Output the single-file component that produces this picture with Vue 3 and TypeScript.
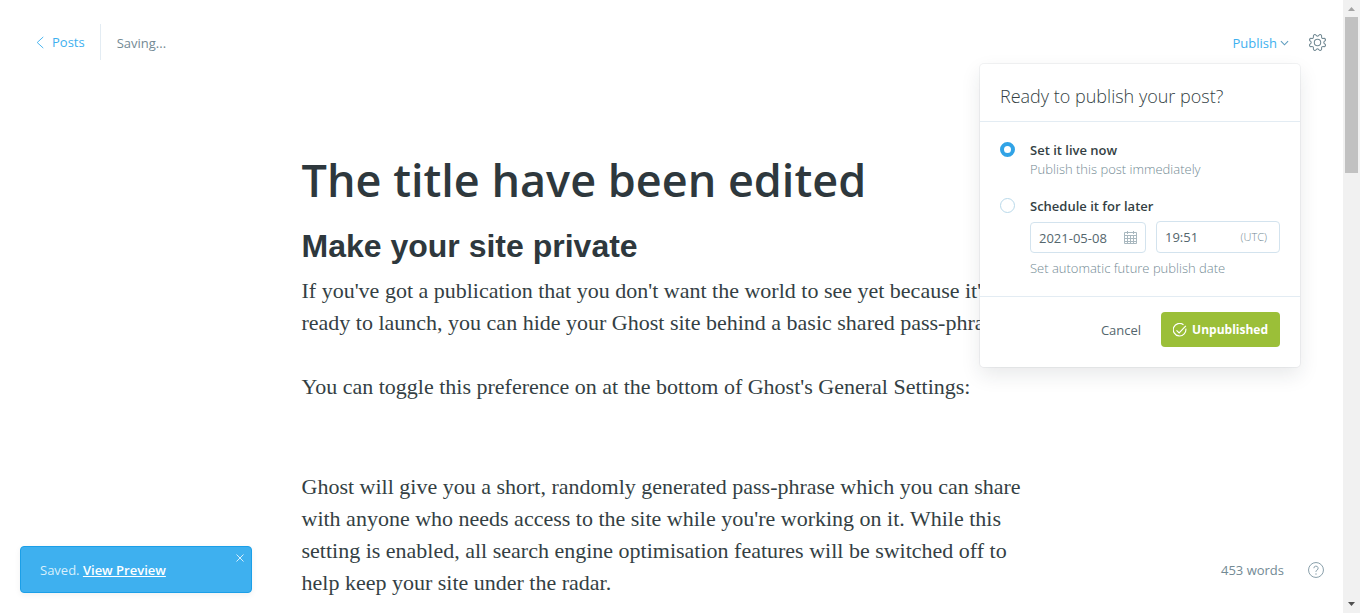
<script setup lang="ts">
import { ref } from 'vue'

const mode = ref<'now' | 'later'>('now')
const date = ref('2021-05-08')
const time = ref('19:51')
</script>

<template>
  <div class="shell">
    <div class="editor">
      <header class="topbar">
        <a class="back" href="#posts">
          <svg class="icon-back" viewBox="0 0 8 14" aria-hidden="true"><path d="M7.5 1 1 7l6.500 6" /></svg>
          Posts
        </a>
        <span class="status">Saving...</span>
        <div class="actions">
          <button class="publish" type="button">
            Publish
            <svg class="icon-down" viewBox="0 0 10 6" aria-hidden="true"><path d="M1 .8 5 5 9 .8" /></svg>
          </button>
          <button class="settings" type="button" aria-label="Settings">
            <svg class="icon-cog" viewBox="0 0 24 24" aria-hidden="true">
              <path d="M10.546 2.438a1.957 1.957 0 0 0 2.908 0L14.4 1.4a1.959 1.959 0 0 1 3.41 1.413l-.071 1.4a1.958 1.958 0 0 0 2.051 2.054l1.4-.071a1.959 1.959 0 0 1 1.41 3.41l-1.042.94a1.96 1.96 0 0 0 0 2.909l1.042.94a1.959 1.959 0 0 1-1.413 3.41l-1.4-.071a1.958 1.958 0 0 0-2.056 2.056l.071 1.4A1.959 1.959 0 0 1 14.4 22.6l-.941-1.041a1.959 1.959 0 0 0-2.908 0L9.606 22.6A1.959 1.959 0 0 1 6.2 21.192l.072-1.4a1.958 1.958 0 0 0-2.056-2.056l-1.4.071A1.958 1.958 0 0 1 1.4 14.4l1.041-.94a1.96 1.96 0 0 0 0-2.909L1.4 9.606A1.958 1.958 0 0 1 2.809 6.2l1.4.071a1.958 1.958 0 0 0 2.058-2.06L6.2 2.81A1.959 1.959 0 0 1 9.606 1.4z" />
              <circle cx="12" cy="12" r="4.500" />
            </svg>
          </button>
        </div>
      </header>

      <main class="post">
        <h1>The title have been edited</h1>
        <h2>Make your site private</h2>
        <p>
          If you've got a publication that you don't want the world to see yet because it's not<br />
          ready to launch, you can hide your Ghost site behind a basic shared pass-phrase.
        </p>
        <p>You can toggle this preference on at the bottom of Ghost's General Settings:</p>
        <p class="after-image">
          Ghost will give you a short, randomly generated pass-phrase which you can share<br />
          with anyone who needs access to the site while you're working on it. While this<br />
          setting is enabled, all search engine optimisation features will be switched off to<br />
          help keep your site under the radar.
        </p>
      </main>

      <form class="menu" @submit.prevent>
        <h3>Ready to publish your post?</h3>
        <div class="options">
          <div class="option">
            <input id="now" v-model="mode" type="radio" name="mode" value="now" />
            <div class="option-body">
              <label for="now">Set it live now</label>
              <span class="hint">Publish this post immediately</span>
            </div>
          </div>
          <div class="option">
            <input id="later" v-model="mode" type="radio" name="mode" value="later" />
            <div class="option-body">
              <label for="later">Schedule it for later</label>
              <div class="fields">
                <div class="field date">
                  <input v-model="date" type="text" aria-label="Publish date" />
                  <svg class="icon-cal" viewBox="0 0 13 13" aria-hidden="true">
                    <path d="M.5 1.500h12v11H.5zM.5 4.500h12M.5 7.500h12M.5 10.500h12M3.500 4v8.500M6.500 4v8.500M9.500 4v8.500M3.500 0v3M9.500 0v3" />
                  </svg>
                </div>
                <div class="field time">
                  <input v-model="time" type="text" aria-label="Publish time" />
                  <span class="zone">(UTC)</span>
                </div>
              </div>
              <span class="hint">Set automatic future publish date</span>
            </div>
          </div>
        </div>
        <footer class="menu-foot">
          <button class="cancel" type="button">Cancel</button>
          <button class="confirm" type="submit">
            <svg class="icon-check" viewBox="0 0 24 24" aria-hidden="true">
              <path d="m6 12.500 4.500 4.500L22 5M21.900 9.500A10.800 10.800 0 1 1 18 3" />
            </svg>
            Unpublished
          </button>
        </footer>
      </form>

      <aside class="toast" role="status">
        <span class="toast-text">Saved. <a href="#preview">View Preview</a></span>
        <button class="close" type="button" aria-label="Close">
          <svg viewBox="0 0 8 8" aria-hidden="true"><path d="m.5.5 7 7m0-7-7 7" /></svg>
        </button>
      </aside>

      <div class="stats">
        <span>453 words</span>
        <a href="#help" aria-label="Help">
          <svg class="icon-help" viewBox="0 0 24 24" aria-hidden="true">
            <circle cx="12" cy="12" r="11.200" />
            <path d="M8.800 9.300a3.200 3.200 0 1 1 4.500 3c-.9.400-1.300 1-1.300 1.900v.8" />
            <circle class="dot" cx="12" cy="18" r="1" />
          </svg>
        </a>
      </div>
    </div>

    <div class="scrollbar" aria-hidden="true">
      <svg class="arrow up" viewBox="0 0 7 4"><path d="M0 4 3.500 0 7 4z" /></svg>
      <div class="thumb"></div>
      <svg class="arrow down" viewBox="0 0 7 4"><path d="M0 0h7L3.500 4z" /></svg>
    </div>
  </div>
</template>

<style>
body {
  margin: 0;
  background: #fff;
}
</style>

<style scoped>
* {
  box-sizing: border-box;
}

.shell {
  display: flex;
  height: 100vh;
  overflow: hidden;
  font: 13px/20px "Open Sans", "Noto Sans", sans-serif;
  color: #343f44;
}

button {
  padding: 0;
  border: 0;
  background: none;
  font: inherit;
  cursor: pointer;
}

svg {
  display: block;
  flex: none;
  fill: none;
  stroke: currentColor;
}

.editor {
  position: relative;
  flex: 1;
  min-width: 0;
  overflow: hidden;
}

.topbar {
  display: flex;
  align-items: center;
  height: 84px;
  padding: 0 17px 0 36px;
}

.back {
  display: flex;
  align-items: center;
  gap: 8px;
  height: 36px;
  padding-right: 15px;
  border-right: 1px solid #e3ecf3;
  color: #3eb0ef;
  text-decoration: none;
}

.icon-back {
  width: 8px;
  height: 13px;
}

.status {
  padding: 2px 0 0 16px;
  color: #738a94;
}

.actions {
  display: flex;
  align-items: center;
  gap: 20px;
  margin-left: auto;
}

.publish {
  display: flex;
  align-items: center;
  gap: 3px;
  padding-top: 2px;
  color: #3eb0ef;
}

.icon-down {
  width: 9px;
  height: 6px;
  stroke-width: 1.2;
  color: #5f9dbf;
}

.settings {
  color: #738a94;
}

.icon-cog {
  width: 17px;
  height: 17px;
  stroke-width: 1.5;
}

.post {
  max-width: 740px;
  margin: 0 auto;
  padding-top: 64px;
}

h1 {
  margin: 0;
  font-size: 45px;
  line-height: 64px;
  font-weight: 600;
  color: #2e383d;
}

h2 {
  margin: 14px 0 9px;
  font: bold 32px/40px "Liberation Sans", Arial, sans-serif;
  color: #2e383d;
}

p {
  margin: 0 0 32px;
  font: 22px/32px "Liberation Serif", Georgia, serif;
  white-space: nowrap;
}

.after-image {
  margin-top: 68px;
}

.menu {
  position: absolute;
  top: 64px;
  right: 43px;
  width: 320px;
  border-radius: 4px;
  background: #fff;
  box-shadow: 0 0 0 1px rgba(99, 114, 130, 0.08), 0 8px 20px rgba(27, 39, 51, 0.1);
}

h3 {
  margin: 0;
  padding: 20px 20px 12px;
  border-bottom: 1px solid #e3ecf3;
  font-size: 18px;
  line-height: 25px;
  font-weight: 300;
}

.options {
  display: flex;
  flex-direction: column;
  gap: 17px;
  padding: 18px 20px;
}

.option {
  display: flex;
  gap: 15px;
}

.option > input {
  appearance: none;
  flex: none;
  width: 15px;
  height: 15px;
  margin: 2px 0 0;
  border: 1px solid #b9d9ea;
  border-radius: 50%;
  background: #fff;
}

.option > input:checked {
  border: 4px solid #31a3e6;
}

.option-body {
  flex: 1;
  min-width: 0;
}

label,
.hint {
  display: block;
}

label {
  font-weight: 600;
}

.hint {
  line-height: 19px;
  font-weight: 300;
  color: #738a94;
}

.fields {
  display: flex;
  align-items: flex-end;
  gap: 10px;
  margin: 5px 0 6px;
}

.field {
  display: flex;
  align-items: center;
  padding: 0 8px;
  border: 1px solid #d3e3ee;
  border-radius: 4px;
}

.field input {
  flex: 1;
  width: 0;
  min-width: 0;
  padding: 0;
  border: 0;
  outline: 0;
  background: none;
  font: inherit;
  color: #54666d;
}

.date {
  width: 116px;
  height: 31px;
}

.time {
  flex: 1;
  height: 32px;
  padding-right: 12px;
}

.icon-cal {
  width: 13px;
  height: 13px;
  color: #a9b8bf;
}

.zone {
  font-size: 11px;
  font-weight: 300;
  color: #738a94;
}

.menu-foot {
  display: flex;
  align-items: center;
  justify-content: flex-end;
  gap: 20px;
  padding: 15px 20px 20px;
  border-top: 1px solid #e3ecf3;
}

.cancel {
  color: #54666d;
}

.confirm {
  display: flex;
  align-items: center;
  gap: 5px;
  height: 35px;
  padding: 0 12px;
  border-radius: 4px;
  background: #9bbf38;
  color: #fff;
  font-size: 12px;
  font-weight: 700;
}

.icon-check {
  width: 14px;
  height: 14px;
  stroke-width: 2;
}

.toast {
  position: absolute;
  left: 20px;
  bottom: 20px;
  display: flex;
  justify-content: space-between;
  width: 232px;
  height: 47px;
  padding: 6px 6px 6px 19px;
  border: 1px solid #1b9fe8;
  border-radius: 4px;
  background: #3eb0ef;
  color: #d8effc;
  box-shadow: 0 2px 6px rgba(0, 0, 0, 0.06);
}

.toast-text {
  align-self: center;
}

.toast a {
  color: #fff;
  font-weight: 600;
}

.close {
  align-self: flex-start;
  padding: 1px;
  color: #d8effc;
}

.close svg {
  width: 8px;
  height: 8px;
}

.stats {
  position: absolute;
  right: 19px;
  bottom: 33px;
  display: flex;
  align-items: center;
  gap: 24px;
  color: #738a94;
}

.stats a {
  color: #8aa0ab;
}

.icon-help {
  width: 16px;
  height: 16px;
  stroke-width: 1.5;
}

.dot {
  fill: currentColor;
  stroke: none;
}

.scrollbar {
  display: flex;
  flex-direction: column;
  align-items: center;
  width: 17px;
  padding: 7px 0;
  background: #f1f1f1;
}

.arrow {
  width: 7px;
  height: 4px;
  stroke: none;
  fill: #505050;
}

.up {
  fill: #a3a3a3;
}

.thumb {
  width: 13px;
  height: 26%;
  margin-top: 6px;
  background: #c1c1c1;
}

.down {
  margin-top: auto;
}
</style>
